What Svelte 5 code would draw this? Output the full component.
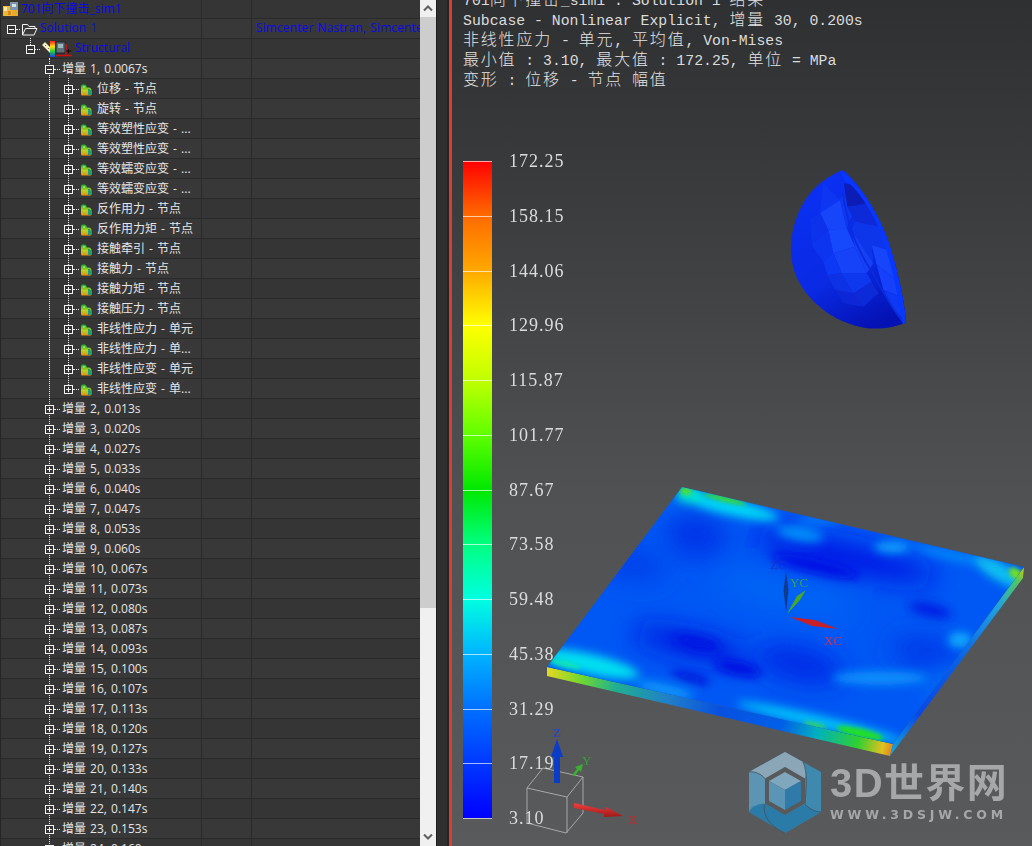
<script>
  const childLabels = [
    '位移 - 节点', '旋转 - 节点', '等效塑性应变 - ...', '等效塑性应变 - ...',
    '等效蠕变应变 - ...', '等效蠕变应变 - ...', '反作用力 - 节点', '反作用力矩 - 节点',
    '接触牵引 - 节点', '接触力 - 节点', '接触力矩 - 节点', '接触压力 - 节点',
    '非线性应力 - 单元', '非线性应力 - 单...', '非线性应变 - 单元', '非线性应变 - 单...'
  ];
  const times = ['0.013','0.020','0.027','0.033','0.040','0.047','0.053','0.060','0.067','0.073','0.080','0.087','0.093','0.100','0.107','0.113','0.120','0.127','0.133','0.140','0.147','0.153','0.160'];

  const rows = [
    { kind: 'file', label: '701向下撞击_sim1', blue: true },
    { kind: 'solution', label: 'Solution 1', blue: true, col3: 'Simcenter Nastran, Simcenter Nastran' },
    { kind: 'structural', label: 'Structural', blue: true },
    { kind: 'inc', open: true, label: '增量 1, 0.0067s' },
    ...childLabels.map((label) => ({ kind: 'result', label })),
    ...times.map((t, i) => ({ kind: 'inc', label: `增量 ${i + 2}, ${t}s` }))
  ];

  const header = [
    '701向下撞击_sim1 : Solution 1 结果',
    'Subcase - Nonlinear Explicit, 增量 30, 0.200s',
    '非线性应力 - 单元, 平均值, Von-Mises',
    '最小值 : 3.10, 最大值 : 172.25, 单位 = MPa',
    '变形 : 位移 - 节点 幅值'
  ];
  const scale = ['172.25','158.15','144.06','129.96','115.87','101.77','87.67','73.58','59.48','45.38','31.29','17.19','3.10'];
  const ticks = scale.map((_, i) => (i / 12) * 100);

  // split a line into latin and CJK runs, the two need different sizes
  function runs(text) {
    return text.match(/[\u4e00-\u9fff]+|[^\u4e00-\u9fff]+/g).map((t) => ({ t, cjk: /[\u4e00-\u9fff]/.test(t) }));
  }

  const facets = [
    ['250,100 300,150 240,190', '#0c36f2'],
    ['240,190 300,150 320,235 265,240', '#1644fa'],
    ['210,205 240,190 265,240 215,285', '#0a30ec'],
    ['265,240 320,235 345,290 280,310', '#1848fc'],
    ['215,285 265,240 280,310 250,335', '#0c36f0'],
    ['280,310 345,290 380,370 305,370', '#1442f8'],
    ['250,335 280,310 305,370 262,375', '#0e38f4'],
    ['262,375 305,370 340,430 285,420', '#0c30e6'],
    ['305,370 380,370 395,395 340,430', '#1038ee'],
    ['285,420 340,430 370,470 310,460', '#0a28d8'],
    ['340,430 395,395 415,430 370,470', '#0a2ad8'],
    ['300,150 310,130 340,190 320,235', '#1038f0'],
    ['345,290 335,240 400,340 380,370', '#1440f4'],
    ['395,285 445,300 470,390 410,345', '#1644fa'],
    ['410,345 470,390 482,440 430,420', '#1440fa'],
    ['430,420 482,440 490,510 455,470', '#0e38f4'],
    ['322,170 385,160 415,230 345,215', '#0a2cd8'],
    ['345,215 415,230 445,300 395,285 400,340 335,240', '#0e36ea'],
    ['312,100 340,105 385,160 322,170', '#081eb4']
  ];
</script>

{#snippet fileIcon()}
  <svg class="ico" width="16" height="16" viewBox="0 0 16 16">
    <rect x="0" y="5" width="9" height="10" fill="#f2b632"/>
    <rect x="1" y="6" width="3" height="4" fill="#ffe9a0"/>
    <rect x="5" y="10" width="3" height="4" fill="#d28a1c"/>
    <rect x="7" y="1" width="8" height="8" fill="#7d95a8"/>
    <rect x="9" y="3" width="4" height="3" fill="#d6e2ea"/>
    <rect x="9" y="9" width="6" height="6" fill="#e9a92a"/>
  </svg>
{/snippet}

{#snippet folderIcon()}
  <svg class="ico" width="17" height="14" viewBox="0 0 17 14" fill="none" stroke="#f2f2f2">
    <path d="M1.500 13V2.500h5l1.500 2h6v2M1.500 13h11.500l3-6.500H4.500L1.500 13z"/>
  </svg>
{/snippet}

{#snippet structuralIcon()}
  <svg class="ico" width="32" height="16" viewBox="0 0 32 16">
    <defs>
      <linearGradient id="rainbow" x1="0" y1="0" x2="0" y2="1">
        <stop offset="0" stop-color="#ff2020"/><stop offset=".35" stop-color="#ffe000"/>
        <stop offset=".65" stop-color="#20d040"/><stop offset="1" stop-color="#2040f0"/>
      </linearGradient>
    </defs>
    <path d="M1 4l3-3 9 9-3 3z" fill="#f4eecb" stroke="#8a7a40" stroke-width=".5"/>
    <path d="M4 4l1 1M7 7l1 1" stroke="#e04060"/>
    <rect x="9" y="0" width="5" height="16" fill="url(#rainbow)"/>
    <rect x="15" y="1" width="9" height="11" fill="#5d7078" stroke="#22282c"/>
    <rect x="17" y="3" width="5" height="4" fill="#9ab8c0"/>
    <path d="M25 3v12M15 14.500h16" stroke="#d01010" stroke-width="1.500"/>
    <path d="M25 10h5M27.500 8v4" stroke="#100808"/>
  </svg>
{/snippet}

{#snippet resultIcon()}
  <svg class="ico" width="12" height="12" viewBox="0 0 12 12">
    <defs>
      <linearGradient id="heat" x1="0" y1="0" x2="0" y2="1">
        <stop offset="0" stop-color="#18a838"/><stop offset=".55" stop-color="#b8d020"/>
        <stop offset="1" stop-color="#f08a18"/>
      </linearGradient>
    </defs>
    <path d="M1 10.500V2.500C1 1 2 .5 3 .5h1.500C6 .5 6.500 2 7 3.500h2c1.500 0 2.500 1.500 2.500 3.500v3c0 1-.5 1.500-1.500 1.500H2c-.5 0-1-.5-1-1.500z" fill="url(#heat)"/>
    <path d="M8 5h1.500L11.500 7v3l-1 1H8z" fill="#20a070"/>
    <path d="M3 2h2v2H3z" fill="#7ce060"/>
  </svg>
{/snippet}

<div class="screen">
  <div class="tree">
    <div class="rows">
      {#each rows as row}
        <div class="row">
          <div class="cell name {row.kind}">
            {#if row.kind !== 'file'}
              <span class="box" class:open={row.open || row.kind === 'solution' || row.kind === 'structural'}></span>
              <i class="dash"></i>
            {/if}
            {#if row.kind === 'file'}{@render fileIcon()}{/if}
            {#if row.kind === 'solution'}{@render folderIcon()}{/if}
            {#if row.kind === 'structural'}{@render structuralIcon()}{/if}
            {#if row.kind === 'result'}{@render resultIcon()}{/if}
            <span class="text" class:blue={row.blue}>{row.label}</span>
          </div>
          <div class="cell mid"></div>
          <div class="cell last"><span class="blue text">{row.col3 ?? ''}</span></div>
        </div>
      {/each}
    </div>
    <i class="guide g1"></i>
    <i class="guide g2"></i>
    <i class="guide g3"></i>
  </div>

  <div class="scrollbar">
    <svg class="chev" width="16" height="17" viewBox="0 0 16 17" fill="none" stroke="#606060" stroke-width="2"><path d="M4 10.500l4-4 4 4"/></svg>
    <div class="thumb"></div>
    <svg class="chev" width="16" height="17" viewBox="0 0 16 17" fill="none" stroke="#606060" stroke-width="2"><path d="M4 5.500l4 4 4-4"/></svg>
  </div>
  <div class="sash"></div>

  <div class="view">
    <svg class="scene" width="580" height="846" viewBox="452 0 580 846">
      <defs>
        <filter id="soft" x="-40%" y="-60%" width="180%" height="220%"><feGaussianBlur stdDeviation="13"/></filter>
        <filter id="soft2" x="-40%" y="-80%" width="180%" height="260%"><feGaussianBlur stdDeviation="5"/></filter>
        <filter id="soft1" x="-30%" y="-60%" width="160%" height="220%"><feGaussianBlur stdDeviation="2"/></filter>
        <filter id="facet" x="-5%" y="-5%" width="110%" height="110%"><feGaussianBlur stdDeviation="1.800"/></filter>
        <clipPath id="face"><polygon points="682,487 1024,567 893,744 547,667"/></clipPath>
        <clipPath id="dome"><path d="M308 60C250 85 205 120 175 190C150 250 145 310 165 370C195 450 280 520 380 535C430 538 470 530 497 518C498 470 470 340 440 260C410 180 350 90 308 60Z"/></clipPath>
        <linearGradient id="front" gradientUnits="userSpaceOnUse" x1="547" y1="670" x2="893" y2="750">
          <stop offset="0" stop-color="#e8d820"/><stop offset=".1" stop-color="#70d830"/>
          <stop offset=".2" stop-color="#20b090"/><stop offset=".35" stop-color="#2080c8"/>
          <stop offset=".5" stop-color="#0850e0"/><stop offset=".68" stop-color="#0060e8"/>
          <stop offset=".78" stop-color="#00b0c0"/><stop offset=".9" stop-color="#30d030"/>
          <stop offset=".97" stop-color="#e0c020"/><stop offset="1" stop-color="#e08020"/>
        </linearGradient>
        <linearGradient id="side" gradientUnits="userSpaceOnUse" x1="893" y1="750" x2="1024" y2="572">
          <stop offset="0" stop-color="#10a0e0"/><stop offset=".2" stop-color="#0848e8"/>
          <stop offset=".5" stop-color="#0860e8"/><stop offset=".8" stop-color="#20a0e0"/>
          <stop offset=".95" stop-color="#50c860"/><stop offset="1" stop-color="#b0c820"/>
        </linearGradient>
        <linearGradient id="shell" gradientUnits="userSpaceOnUse" x1="180" y1="120" x2="400" y2="530">
          <stop offset="0" stop-color="#0a30f2"/><stop offset=".6" stop-color="#0a2ae4"/><stop offset="1" stop-color="#0412b4"/>
        </linearGradient>
        <linearGradient id="spX" x1="0" y1="0" x2="0" y2="1"><stop offset="0" stop-color="#f04040"/><stop offset="1" stop-color="#a01818"/></linearGradient>
      </defs>

      <!-- hemisphere, points are in 3x crop units -->
      <g transform="translate(740 150) scale(.33333)">
        <path d="M308 60C250 85 205 120 175 190C150 250 145 310 165 370C195 450 280 520 380 535C430 538 470 530 497 518C498 470 470 340 440 260C410 180 350 90 308 60Z" fill="url(#shell)"/>
        <g clip-path="url(#dome)">
          <g filter="url(#facet)">
            {#each facets as [pts, fill]}
              <polygon points={pts} {fill}/>
            {/each}
          </g>
          <path d="M308 130C320 210 350 300 400 372C430 430 460 480 492 520" fill="none" stroke="#0a2cdc" stroke-width="5"/>
          <path d="M300 60C350 90 410 180 440 260C470 340 498 470 500 525L488 522C472 420 445 300 408 215C375 150 340 105 312 90Z" fill="#0838ff"/>
        </g>
      </g>

      <!-- plate -->
      <polygon points="547,667 893,744 890,756 547,676" fill="url(#front)"/>
      <polygon points="893,744 1024,567 1023,578 890,756" fill="url(#side)"/>
      <polygon points="682,487 1024,567 893,744 547,667" fill="#0058f4"/>
      <g clip-path="url(#face)">
        <g filter="url(#soft)" transform="rotate(13 785 615)">
          <ellipse cx="830" cy="545" rx="95" ry="14" fill="#0018e4"/>
          <ellipse cx="680" cy="555" rx="30" ry="26" fill="#0036e8"/>
          <ellipse cx="700" cy="665" rx="60" ry="12" fill="#0018e0"/>
          <ellipse cx="810" cy="660" rx="45" ry="16" fill="#0026e6"/>
          <ellipse cx="930" cy="620" rx="35" ry="14" fill="#0034e8"/>
          <ellipse cx="620" cy="600" rx="40" ry="16" fill="#0040ea"/>
          <ellipse cx="780" cy="595" rx="70" ry="12" fill="#0068f6"/>
          <ellipse cx="640" cy="520" rx="70" ry="10" fill="#0070f6"/>
          <ellipse cx="965" cy="650" rx="22" ry="12" fill="#0080f8"/>
        </g>
        <g filter="url(#soft2)">
          <ellipse cx="815" cy="566" rx="45" ry="7" fill="#0010e4" transform="rotate(13 815 566)"/>
          <ellipse cx="697" cy="643" rx="24" ry="7" fill="#0014e2" transform="rotate(13 697 643)"/>
          <ellipse cx="738" cy="668" rx="24" ry="7" fill="#000ce0" transform="rotate(13 738 668)"/>
          <ellipse cx="690" cy="678" rx="20" ry="4" fill="#0008d8" transform="rotate(13 690 678)"/>
          <ellipse cx="930" cy="610" rx="22" ry="7" fill="#0020e4" transform="rotate(13 930 610)"/>
          <ellipse cx="800" cy="534" rx="24" ry="7" fill="#0490f8" transform="rotate(10 800 534)"/>
          <ellipse cx="820" cy="520" rx="22" ry="4" fill="#0480f8"/>
          <ellipse cx="892" cy="547" rx="18" ry="6" fill="#08a0fa"/>
          <ellipse cx="955" cy="556" rx="45" ry="5" fill="#0488f8" transform="rotate(13 955 556)"/>
          <ellipse cx="880" cy="678" rx="48" ry="7" fill="#0890fa"/>
          <ellipse cx="960" cy="640" rx="12" ry="8" fill="#08a8fa"/>
          <ellipse cx="665" cy="690" rx="30" ry="6" fill="#0898fa" transform="rotate(13 665 690)"/>
          <ellipse cx="820" cy="722" rx="85" ry="6" fill="#00c8f8" transform="rotate(13 820 722)"/>
          <ellipse cx="590" cy="664" rx="50" ry="10" fill="#00e0f0" transform="rotate(13 590 664)"/>
          <ellipse cx="730" cy="507" rx="50" ry="8" fill="#00d8f4" transform="rotate(13 730 507)"/>
          <ellipse cx="690" cy="495" rx="14" ry="8" fill="#00e8d0"/>
          <ellipse cx="1000" cy="572" rx="28" ry="9" fill="#08c0f0" transform="rotate(30 1000 572)"/>
        </g>
        <g filter="url(#soft1)">
          <ellipse cx="686" cy="491" rx="6" ry="4" fill="#50e030"/>
          <ellipse cx="725" cy="499" rx="22" ry="2.500" fill="#40e020" transform="rotate(14 725 499)"/>
          <ellipse cx="1016" cy="574" rx="8" ry="5" fill="#70e020" transform="rotate(40 1016 574)"/>
          <ellipse cx="860" cy="733" rx="24" ry="4.500" fill="#20e020" transform="rotate(13 860 733)"/>
          <ellipse cx="815" cy="725" rx="12" ry="2" fill="#40e040" transform="rotate(13 815 725)"/>
          <ellipse cx="565" cy="664" rx="16" ry="3" fill="#10e8b0" transform="rotate(13 565 664)"/>
        </g>
      </g>

      <!-- view triad -->
      <path d="M786 613L783.500 590L786 571L788.500 590Z" fill="#103a90"/>
      <path d="M787 614L797 596L806 590L800 600Z" fill="#4aa828"/>
      <path d="M790 617L815 620L838 629L812 626Z" fill="#c82028"/>
      <text class="axis" x="770" y="569" fill="#1830c8">ZC</text>
      <text class="axis" x="790" y="587" fill="#38a050">YC</text>
      <text class="axis" x="824" y="645" fill="#d83050">XC</text>

      <!-- corner triad -->
      <g fill="none" stroke="#a8a8a8" stroke-width="1">
        <path d="M543 768L583 777L567 797L527 788ZM583 777V813L566 833L527 823V788M567 797V833"/>
      </g>
      <path d="M554 783V757H551L557 739L563 757H560V783Z" fill="#0a3cc8"/>
      <path d="M572 775L577 769L575 767L583 764L581 772L579 770L575 776Z" fill="#3ab030"/>
      <path d="M574 803L605 810L606 807L623 816L604 817L604 814L574 808Z" fill="url(#spX)"/>
      <text class="axis" x="553" y="737" fill="#2040d8">Z</text>
      <text class="axis" x="582" y="765" fill="#38a038">Y</text>
      <text class="axis" x="628" y="824" fill="#c82828">X</text>

      <!-- watermark mark -->
      <g>
        <polygon points="785,752 821,772 821,812 785,833 749,812 749,772" fill="#3f88ae"/>
        <path d="M749 772L785 752L803 762C808 772 805 778 805 779L785 767L765 779C758 772 752 771 749 772Z" fill="#8ba6b7"/>
        <path d="M749 772C755 771 762 774 765 779V804L772 815C760 805 752 802 749 812Z" fill="#5c95b4"/>
        <path d="M749 812C753 806 760 803 765 804L785 815L805 804C808 808 815 812 821 812L785 833Z" fill="#2b7ba8"/>
        <g fill="none" stroke="#42505a" stroke-width=".8">
          <path d="M803 762C808 772 806 790 805 804"/>
          <path d="M749 772C755 771 762 774 767 781"/>
          <path d="M765 804C762 812 768 826 785 833"/>
          <path d="M805 804C808 808 815 812 821 812"/>
        </g>
        <polygon points="785,767 805,778.500 805,803.500 785,815 765,803.500 765,778.500" fill="#58595b"/>
        <polygon points="785,772 801,781 785,790 769,781" fill="#7fa7bd"/>
        <polygon points="769,781 785,790 785,810 769,801" fill="#5a95b5"/>
        <polygon points="801,781 785,790 785,810 801,801" fill="#2f7aa8"/>
      </g>
    </svg>

    <div class="caption">
      {#each header as line}
        <div class="cap-line">{#each runs(line) as r}<span class:cjk={r.cjk}>{r.t}</span>{/each}</div>
      {/each}
    </div>

    <div class="legend">
      <div class="bar">
        {#each ticks as t}<i class="tick" style="top: {t}%"></i>{/each}
      </div>
      <div class="labels">
        {#each scale as v}<span>{v}</span>{/each}
      </div>
    </div>

    <div class="brand">
      <div class="brand-name">3D世界网</div>
      <div class="brand-url">WWW.3DSJW.COM</div>
    </div>
  </div>
</div>

<style>
  :global(body) { margin: 0; background: #2f2f2f; }

  .screen {
    display: flex;
    width: 1032px;
    height: 846px;
    overflow: hidden;
  }

  .tree {
    position: relative;
    width: 420px;
    flex: none;
    overflow: hidden;
    background: #333;
    border-left: 1px solid #262626;
    box-sizing: border-box;
    font: 12px "Open Sans", "Noto Sans CJK SC", sans-serif;
    word-spacing: 1px;
    color: #e6e6e6;
  }

  .rows { margin-top: -1px; }

  .row {
    display: flex;
    height: 20px;
    box-sizing: border-box;
    border-bottom: 1px solid #2a2a2a;
    background: #353535;
  }
  .row:nth-child(even) { background: #383838; }

  .cell {
    display: flex;
    align-items: center;
    border-right: 1px solid #2a2a2a;
    box-sizing: border-box;
    white-space: nowrap;
    overflow: hidden;
  }
  .name { width: 201px; }
  .mid { width: 50px; }
  .last { flex: 1; border-right: 0; padding-left: 4px; letter-spacing: .1px; }

  .blue { color: #0a0ae6; }
  .ico { flex: none; display: block; }
  .text { margin-top: -2px; }

  .file { padding-left: 2px; }
  .file .text { margin-left: 2px; }
  .solution { padding-left: 6px; }
  .solution .dash { width: 4px; }
  .solution .ico { margin-left: 1px; }
  .solution .text { margin-left: 2px; }
  .structural { padding-left: 25px; }
  .structural .dash { width: 5px; }
  .structural .ico { margin-left: 1px; }
  .structural .text { margin-left: 2px; }
  .inc { padding-left: 44px; }
  .inc .text { margin-left: 2px; }
  .result { padding-left: 63px; }
  .result .ico { margin: 3px 0 0 1px; }
  .result .text { margin-left: 5px; }

  .box {
    position: relative;
    z-index: 1;
    flex: none;
    width: 9px;
    height: 9px;
    margin-top: 2px;
    box-sizing: border-box;
    border: 1px solid #f4f4f4;
    background: #333;
  }
  .box::before {
    content: "";
    position: absolute;
    left: 1px;
    top: 3px;
    width: 5px;
    height: 1px;
    background: #f4f4f4;
  }
  .box:not(.open)::after {
    content: "";
    position: absolute;
    left: 3px;
    top: 1px;
    width: 1px;
    height: 5px;
    background: #f4f4f4;
  }
  .dash {
    flex: none;
    width: 6px;
    height: 0;
    margin-top: 2px;
    border-top: 1px dotted #f0f0f0;
  }

  .guide {
    position: absolute;
    width: 0;
    border-left: 1px dotted #f0f0f0;
  }
  .g1 { left: 29px; top: 38px; height: 7px; }
  .g2 { left: 48px; top: 58px; bottom: 0; }
  .g3 { left: 67px; top: 78px; height: 311px; }

  .scrollbar {
    display: flex;
    flex-direction: column;
    width: 16px;
    flex: none;
    background: #f0f0f0;
  }
  .chev { flex: none; display: block; }
  .thumb { height: 591px; background: #cdcdcd; margin-bottom: auto; }

  .sash {
    width: 13px;
    flex: none;
    box-sizing: border-box;
    background: #2f2f2f;
    border-left: 1px solid #1c1c1c;
    border-right: 2px solid #242424;
  }

  .view {
    position: relative;
    flex: 1;
    box-sizing: border-box;
    border-left: 3px solid #dd3d30;
    background: linear-gradient(#2e3032 0%, #3a3b3d 22%, #505153 58%, #595a5c 100%);
    overflow: hidden;
  }

  .scene { position: absolute; left: 0; top: 0; display: block; }
  .axis { font: 13px "Liberation Serif", serif; }

  .caption {
    position: absolute;
    left: 11px;
    top: -12px;
    font: 14.8px/20px "Liberation Mono", "Noto Sans CJK SC", monospace;
    color: #dcdcdc;
    white-space: pre;
  }
  .cap-line { height: 20px; }
  .cjk { font: 300 16px/20px "Noto Sans CJK SC", sans-serif; letter-spacing: 1.8px; color: #e4e4e4; }

  .legend {
    position: absolute;
    left: 11px;
    top: 161px;
    display: flex;
    gap: 17px;
    height: 657px;
  }
  .bar {
    position: relative;
    width: 29px;
    background: linear-gradient(#ff0000 0%, #ff6a00 8.33%, #ffa800 16.67%, #ffff00 25%, #c0ff00 33.33%, #60ff00 41.67%, #00e800 50%, #00ff80 58.33%, #00ffe0 66.67%, #00b4ff 75%, #0070ff 83.33%, #0038ff 91.67%, #0000ff 100%);
  }
  .tick {
    position: absolute;
    left: 0;
    right: 0;
    height: 1px;
    background: rgba(255, 255, 255, .65);
  }
  .labels {
    display: flex;
    flex-direction: column;
    justify-content: space-between;
    margin: -9px 0;
    font: 18px/18px "Liberation Serif", serif;
    letter-spacing: 1px;
    color: #dcdcdc;
    white-space: nowrap;
  }

  .brand {
    position: absolute;
    left: 378px;
    top: 761px;
    display: flex;
    flex-direction: column;
    color: #a6a7a9;
  }
  .brand-name {
    font: 700 40px/44px "Liberation Sans", "Noto Sans CJK SC", sans-serif;
    letter-spacing: 1.4px;
    white-space: nowrap;
  }
  .brand-url {
    margin-top: 2px;
    font: 700 12.5px/16px "DejaVu Sans", sans-serif;
    letter-spacing: 3.8px;
    white-space: nowrap;
  }
</style>
